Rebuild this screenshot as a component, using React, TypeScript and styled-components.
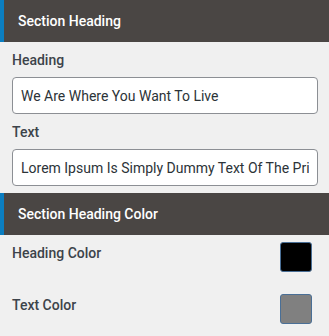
import React from 'react'
import styled, { createGlobalStyle } from 'styled-components'

const GlobalStyle = createGlobalStyle`
  html, body {
    margin: 0;
    padding: 0;
    background: #f0f0f0;
  }
  body {
    font-family: Roboto, 'Noto Sans', sans-serif;
  }
  * {
    box-sizing: border-box;
  }
`

const Panel = styled.div`
  width: 329px;
  background: #f0f0f0;
`

const SectionHeader = styled.div`
  height: 42px;
  display: flex;
  align-items: center;
  padding-left: 18px;
  background: #4a4644;
  border-left: 4px solid #0b7ec1;
  padding-left: 14px;
  color: #ffffff;
  font-size: 14px;
  font-weight: 500;
`

const Body = styled.div`
  padding: 0 11px 7px 12px;
`

const Field = styled.div`
  display: flex;
  flex-direction: column;
  margin-top: 8px;
`

const Label = styled.label`
  font-size: 14px;
  line-height: 20px;
  font-weight: 500;
  color: #3c434a;
`

const TextInput = styled.input`
  margin-top: 7px;
  height: 37px;
  width: 100%;
  padding: 0 8px;
  border: 1px solid #8c8f94;
  border-radius: 4px;
  background: #ffffff;
  font-family: Roboto, 'Noto Sans', sans-serif;
  font-size: 14px;
  color: #2c3338;
  outline: none;
`

const ColorBody = styled.div`
  display: flex;
  flex-direction: column;
  gap: 22px;
  padding: 7px 17px 14px 12px;
`

const ColorRow = styled.div`
  display: flex;
  justify-content: space-between;
  align-items: flex-start;
`

const ColorLabel = styled(Label)`
  padding-top: 1px;
`

const Swatch = styled.div<{ $color: string }>`
  width: 32px;
  height: 30px;
  border-radius: 3px;
  border: 1px solid #4a6f96;
  background: ${(p) => p.$color};
`

const App: React.FC = () => {
  return (
    <>
      <GlobalStyle />
      <Panel>
        <SectionHeader>Section Heading</SectionHeader>
        <Body>
          <Field>
            <Label>Heading</Label>
            <TextInput readOnly value="We Are Where You Want To Live" />
          </Field>
          <Field>
            <Label>Text</Label>
            <TextInput
              readOnly
              value="Lorem Ipsum Is Simply Dummy Text Of The Printing And Typesetting Industry"
            />
          </Field>
        </Body>
        <SectionHeader>Section Heading Color</SectionHeader>
        <ColorBody>
          <ColorRow>
            <ColorLabel>Heading Color</ColorLabel>
            <Swatch $color="#000000" />
          </ColorRow>
          <ColorRow>
            <ColorLabel>Text Color</ColorLabel>
            <Swatch $color="#808080" />
          </ColorRow>
        </ColorBody>
      </Panel>
    </>
  )
}

export default App
